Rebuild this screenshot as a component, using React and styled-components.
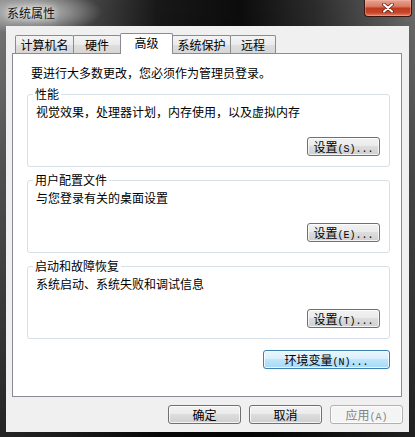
import React from "react";
import styled, { createGlobalStyle } from "styled-components";

const GlobalStyle = createGlobalStyle`
  html, body {
    margin: 0;
    padding: 0;
    background: #111;
  }
  body {
    font-family: "Noto Sans CJK SC", "Liberation Sans", sans-serif;
    font-size: 12px;
    color: #000;
  }
`;

const Window = styled.div`
  width: 415px;
  height: 437px;
  display: flex;
  flex-direction: column;
  box-sizing: border-box;
  background:
    radial-gradient(ellipse 70px 22px at 32px 12px, rgba(210, 210, 210, 0.95), rgba(210, 210, 210, 0) 100%),
    linear-gradient(to bottom, rgba(0, 0, 0, 0) 0%, rgba(0, 0, 0, 0.35) 40%, rgba(0, 0, 0, 0.7) 100%),
    linear-gradient(to right, #7a7a7a 0%, #505050 18%, #181818 38%, #0c0c0c 58%, #2c2c2c 76%, #6c6c6c 100%);
`;

const TitleBar = styled.div`
  height: 26px;
  flex: none;
  display: flex;
  justify-content: space-between;
  align-items: flex-start;
  padding: 0 3px 0 7px;
`;

const Title = styled.div`
  margin-top: 6px;
  line-height: 14px;
  font-size: 12px;
  color: #111;
  text-shadow: 0 0 6px rgba(255, 255, 255, 0.9), 0 0 10px rgba(255, 255, 255, 0.6);
`;

const CloseButton = styled.div`
  width: 48px;
  height: 17px;
  box-sizing: border-box;
  border: 1px solid #3a150f;
  border-top: none;
  border-radius: 0 0 4px 4px;
  background: linear-gradient(#e8a393 0%, #d97a62 40%, #c23a1c 52%, #c7452a 78%, #e48364 100%);
  box-shadow: inset 0 0 0 1px rgba(255, 200, 180, 0.35);
  display: flex;
  align-items: center;
  justify-content: center;
`;

const Client = styled.div`
  flex: 1;
  margin: 0 6px 5px 6px;
  background: #f0f0f0;
  display: flex;
  flex-direction: column;
  padding: 7px 7px 0 6px;
  box-sizing: border-box;
`;

const TabRow = styled.div`
  display: flex;
  align-items: flex-end;
  height: 20px;
  margin-left: 3px;
  position: relative;
  z-index: 1;
`;

const Tab = styled.div`
  width: ${(p) => p.$w}px;
  height: ${(p) => (p.$active ? 21 : 18)}px;
  margin-bottom: ${(p) => (p.$active ? -1 : 0)}px;
  box-sizing: border-box;
  border: 1px solid #898c95;
  border-bottom: none;
  border-radius: 2px 2px 0 0;
  background: ${(p) =>
    p.$active ? "#ffffff" : "linear-gradient(#f4f4f4, #ebebeb 50%, #dfdfdf 50%, #d6d6d6)"};
  position: relative;
  z-index: ${(p) => (p.$active ? 2 : 1)};
  text-align: center;
  line-height: 17px;
  font-size: 12px;
  white-space: nowrap;
  & + & {
    margin-left: -1px;
  }
`;

const Panel = styled.div`
  flex: 1;
  background: #fff;
  border: 1px solid #898c95;
  display: flex;
  flex-direction: column;
  padding: 11px 11px 0 14px;
`;

const Intro = styled.div`
  margin-left: 4px;
  line-height: 16px;
`;

const Group = styled.fieldset`
  margin: 6px 0 0 0;
  min-width: 0;
  border: 1px solid #d5dfe5;
  border-radius: 3px;
  padding: 3px 9px 10px 8px;
`;

const Legend = styled.legend`
  margin-left: -3px;
  padding: 0 2px;
  line-height: 14px;
  font-size: 12px;
`;

const Desc = styled.div`
  line-height: 16px;
`;

const ButtonRow = styled.div`
  display: flex;
  justify-content: flex-end;
  gap: 8px;
  margin-top: ${(p) => p.$gap || 0}px;
`;

const Button = styled.button`
  width: ${(p) => p.$w || 73}px;
  height: 19px;
  box-sizing: border-box;
  padding: 0;
  border: 1px solid ${(p) => (p.$focus ? "#3c7fb1" : p.disabled ? "#adb2b5" : "#707070")};
  border-radius: 3px;
  background: ${(p) =>
    p.$focus
      ? "linear-gradient(#eaf6fd 0%, #d9f0fc 45%, #bee6fd 50%, #a7d9f5 100%)"
      : p.disabled
      ? "#f4f4f4"
      : "linear-gradient(#f2f2f2 0%, #ebebeb 45%, #dddddd 50%, #cfcfcf 100%)"};
  box-shadow: inset 0 0 0 1px rgba(255, 255, 255, 0.75);
  font-family: "Noto Sans CJK SC", "Liberation Sans", sans-serif;
  font-size: 12px;
  line-height: 17px;
  color: ${(p) => (p.disabled ? "#838383" : "#000")};
  white-space: nowrap;
`;

const Accel = styled.span`
  font-family: "Liberation Mono", "DejaVu Sans Mono", monospace;
  font-size: 10px;
`;

const EnvRow = styled(ButtonRow)`
  margin-top: 11px;
`;

const Footer = styled.div`
  display: flex;
  justify-content: flex-end;
  gap: 8px;
  padding: 8px 0 8px 0;
  margin-right: -1px;
`;

const tabs = [
  { label: "计算机名", w: 59 },
  { label: "硬件", w: 48 },
  { label: "高级", w: 53, active: true },
  { label: "系统保护", w: 59 },
  { label: "远程", w: 46 },
];

const groups = [
  { title: "性能", desc: "视觉效果，处理器计划，内存使用，以及虚拟内存", key: "S" },
  { title: "用户配置文件", desc: "与您登录有关的桌面设置", key: "E" },
  { title: "启动和故障恢复", desc: "系统启动、系统失败和调试信息", key: "T" },
];

const CloseIcon = () => (
  <svg width="12" height="10" viewBox="0 0 12 10">
    <path d="M2 1.5 L10 8.5 M10 1.5 L2 8.5" stroke="#4a1a10" strokeWidth="3.6" strokeLinecap="round" />
    <path d="M2 1.5 L10 8.5 M10 1.5 L2 8.5" stroke="#ffffff" strokeWidth="2.2" strokeLinecap="round" />
  </svg>
);

const App = () => {
  return (
    <>
      <GlobalStyle />
      <Window>
        <TitleBar>
          <Title>系统属性</Title>
          <CloseButton>
            <CloseIcon />
          </CloseButton>
        </TitleBar>
        <Client>
          <TabRow>
            {tabs.map((t) => (
              <Tab key={t.label} $w={t.w} $active={t.active}>
                {t.label}
              </Tab>
            ))}
          </TabRow>
          <Panel>
            <Intro>要进行大多数更改，您必须作为管理员登录。</Intro>
            {groups.map((g) => (
              <Group key={g.title}>
                <Legend>{g.title}</Legend>
                <Desc>{g.desc}</Desc>
                <ButtonRow $gap={17}>
                  <Button>
                    设置<Accel>({g.key})...</Accel>
                  </Button>
                </ButtonRow>
              </Group>
            ))}
            <EnvRow>
              <Button $w={127} $focus>
                环境变量<Accel>(N)...</Accel>
              </Button>
            </EnvRow>
          </Panel>
          <Footer>
            <Button>确定</Button>
            <Button>取消</Button>
            <Button disabled>
              应用<Accel>(A)</Accel>
            </Button>
          </Footer>
        </Client>
      </Window>
    </>
  );
};

export default App;
